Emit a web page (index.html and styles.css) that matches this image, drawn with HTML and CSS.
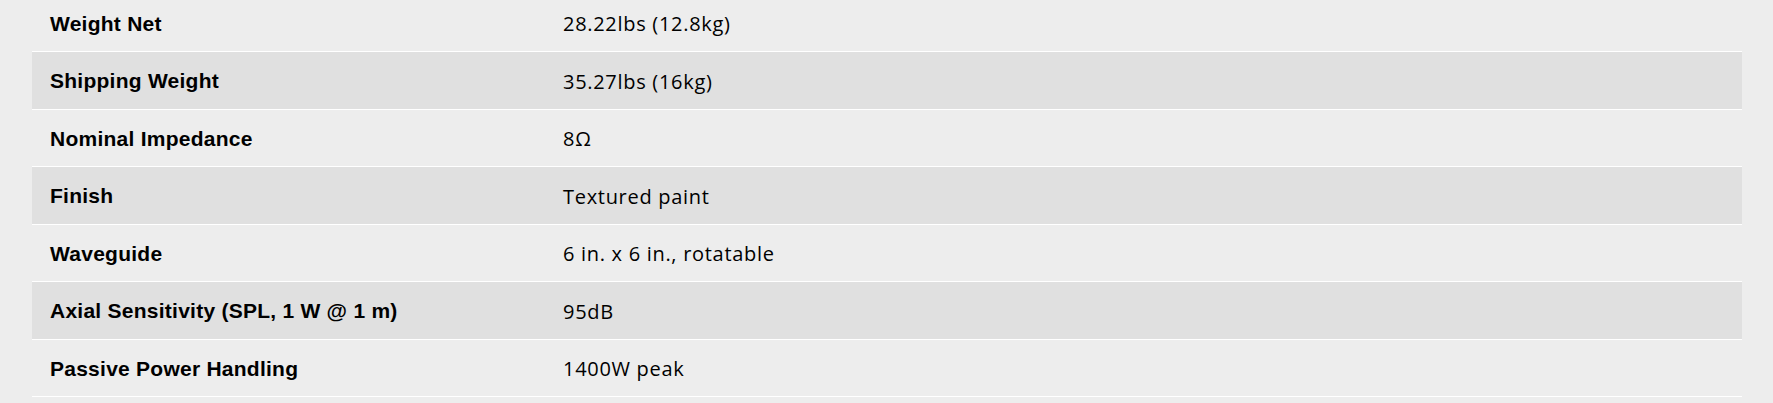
FILE: index.html
```html
<!DOCTYPE html>
<html>
<head>
<meta charset="utf-8">
<link rel="stylesheet" href="styles.css">
</head>
<body>
<div class="specs">
  <div class="row"><div class="label">Weight Net</div><div class="value">28.22lbs (12.8kg)</div></div>
  <div class="row alt"><div class="label">Shipping Weight</div><div class="value">35.27lbs (16kg)</div></div>
  <div class="row"><div class="label">Nominal Impedance</div><div class="value">8Ω</div></div>
  <div class="row alt"><div class="label">Finish</div><div class="value">Textured paint</div></div>
  <div class="row"><div class="label">Waveguide</div><div class="value">6 in. x 6 in., rotatable</div></div>
  <div class="row alt"><div class="label">Axial Sensitivity (SPL, 1 W @ 1 m)</div><div class="value">95dB</div></div>
  <div class="row"><div class="label">Passive Power Handling</div><div class="value">1400W peak</div></div>
</div>
</body>
</html>
```
FILE: styles.css
```css
html, body {
  margin: 0;
  padding: 0;
  background: #ededed;
}
body {
  font-family: "Open Sans", "Liberation Sans", sans-serif;
  color: #000;
  overflow: hidden;
}
.specs {
  margin: -5.5px 31px 0 32px;
}
.row {
  display: grid;
  grid-template-columns: 30% 70%;
  align-items: center;
  height: 56.5px;
  border-bottom: 1px solid #ffffff;
  background: #ededed;
}
.row.alt {
  background: #e0e0e0;
}
.label, .value {
  padding: 2px 18px 0;
  font-size: 20px;
  white-space: nowrap;
}
.label {
  font-family: "Liberation Sans", Arial, sans-serif;
  font-weight: 700;
  font-size: 21px;
  letter-spacing: 0.25px;
}
.value {
  letter-spacing: 0.7px;
}
```
